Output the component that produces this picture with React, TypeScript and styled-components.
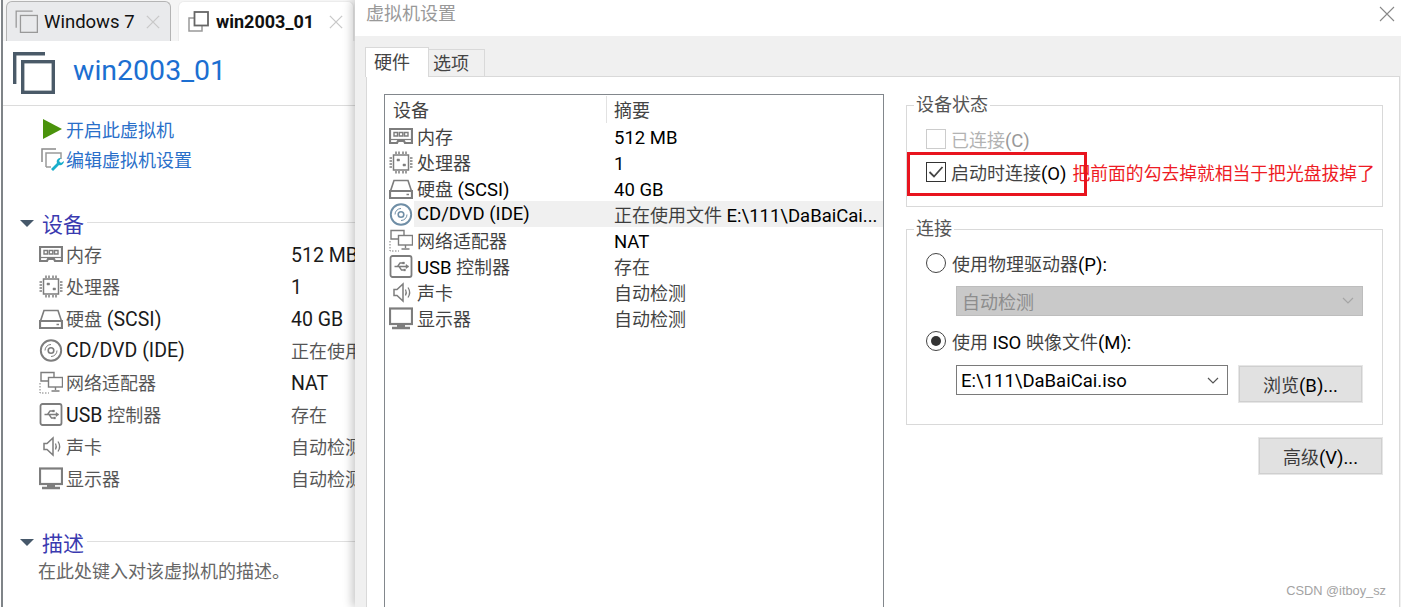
import React from 'react';
import styled, { createGlobalStyle } from 'styled-components';

const FONT = `Roboto, "Noto Sans CJK SC", sans-serif`;

const Global = createGlobalStyle`
  html, body { margin: 0; padding: 0; background: #fff; overflow: hidden; }
  #root { width: 1401px; height: 607px; }
  * { box-sizing: border-box; }
`;

const Screen = styled.div`
  position: relative;
  display: flex;
  width: 1401px;
  height: 607px;
  overflow: hidden;
  font-family: ${FONT};
  font-size: 18px;
  color: #1a1a1a;
`;

/* Chinese runs render thin and grey in the source, Latin runs dark and a little wider */
const Han = styled.span`
  font-size: 18px;
  opacity: 0.74;
`;
const Mixed = ({ text }: { text: string }) => (
  <>
    {text.split(/([\u3000-\u9fff]+)/).map((run, i) =>
      i % 2 ? <Han key={i}>{run}</Han> : <React.Fragment key={i}>{run}</React.Fragment>
    )}
  </>
);
/* a purely Latin cell has a shorter line box, so it sits a little high without this */
const ValueCell = styled.span<{ $latin: boolean }>`
  padding-top: ${p => (p.$latin ? '3px' : '0')};
`;
const isLatin = (text: string) => /^[\x00-\x7f]+$/.test(text);

/* ---------- left panel ---------- */
const LeftPanel = styled.section`
  flex: 0 0 355px;
  display: flex;
  flex-direction: column;
  border-left: 2px solid #7f8488;
  margin-left: 1px;
  margin-right: -1px;
  overflow: hidden;
`;
const TabStrip = styled.div`
  flex: 0 0 41px;
  display: flex;
  align-items: flex-end;
  gap: 7px;
  padding-left: 3px;
  background: #f5f5f5;
`;
const VmTab = styled.div<{ $active?: boolean }>`
  height: 40px;
  width: ${p => (p.$active ? '176px' : '165px')};
  display: flex;
  align-items: center;
  padding: 0 10px 0 ${p => (p.$active ? '9px' : '8px')};
  border-radius: 6px 6px 0 0;
  border: 1px solid ${p => (p.$active ? '#ececec' : '#b4b4b4')};
  border-bottom: 0;
  background: ${p => (p.$active ? '#fff' : '#e9eaec')};
  font-size: ${p => (p.$active ? '18px' : '18.500px')};
  font-weight: ${p => (p.$active ? 700 : 400)};
  color: #111;
`;
const TabLabel = styled.span<{ $active?: boolean }>`
  margin-left: ${p => (p.$active ? '7px' : '6px')};
  flex: 1;
  white-space: nowrap;
`;
const VmHeader = styled.header`
  flex: 0 0 65px;
  display: flex;
  align-items: center;
  padding: 0 0 2px 9px;
  border-bottom: 1px solid #dcdcdc;
`;
const VmTitle = styled.h1`
  margin: 0 0 3px 18px;
  font-size: 28.500px;
  font-weight: 400;
  color: #1c6fd1;
`;
const Actions = styled.div`
  display: flex;
  flex-direction: column;
  padding: 8px 0 0 37px;
  height: 100px;
`;
const ActionRow = styled.div`
  height: 30px;
  display: flex;
  align-items: center;
  color: #2a6fc9;
  font-size: 18px;
`;
const ActionIcon = styled.span<{ $inset?: number }>`
  flex: 0 0 26px;
  display: flex;
  align-items: center;
  padding-left: ${p => p.$inset ?? 0}px;
`;
const SectionHead = styled.div`
  height: 34px;
  display: flex;
  align-items: center;
  padding-left: 17px;
  color: #3a3ab0;
  font-size: 21px;
`;
const Caret = styled.span`
  width: 0;
  height: 0;
  margin-right: 8px;
  border-left: 7px solid transparent;
  border-right: 7px solid transparent;
  border-top: 7px solid #46586a;
`;
const SectionRule = styled.span`
  flex: 1;
  height: 1px;
  margin: 0 0 2px 3px;
  background: #dfdfdf;
`;
const LeftRows = styled.div`
  display: flex;
  flex-direction: column;
  padding-left: 36px;
  margin: -2px 0 31px;
`;
const LeftRow = styled.div`
  height: 32px;
  display: flex;
  align-items: center;
  white-space: nowrap;
  font-size: 19.500px;
  color: #1a1a1a;
`;
const LeftName = styled.span`
  flex: 0 0 252px;
  display: flex;
  align-items: center;
  gap: 3px;
`;
const Description = styled.p`
  margin: 0;
  padding-left: 35px;
  font-size: 18px;
  line-height: 26px;
  color: #666;
`;

/* ---------- dialog ---------- */
const Dialog = styled.section`
  position: relative;
  flex: 1;
  display: flex;
  flex-direction: column;
  background: #f0f0f0;
  padding: 0 1px 0 11px;
  box-shadow: -3px 0 9px rgba(0, 0, 0, 0.22);
`;
const TitleBar = styled.div`
  flex: 0 0 36px;
  margin: 0 -1px 0 -11px;
  padding: 0 6px 9px 11px;
  display: flex;
  align-items: center;
  justify-content: space-between;
  background: #fff;
  color: #999;
  font-size: 18px;
  line-height: 26px;
`;
const DialogTabs = styled.div`
  display: flex;
  align-items: flex-end;
  margin: 11px 0 -1px -1px;
  position: relative;
  height: 30px;
`;
const DialogTab = styled.div<{ $active?: boolean }>`
  height: ${p => (p.$active ? '30px' : '28px')};
  width: ${p => (p.$active ? '64px' : '56px')};
  display: flex;
  align-items: center;
  padding: 0 0 ${p => (p.$active ? '4px' : '2px')} ${p => (p.$active ? '8px' : '4px')};
  border: 1px solid #d9d9d9;
  border-left: ${p => (p.$active ? '1px solid #d9d9d9' : '0')};
  border-bottom: ${p => (p.$active ? '0' : '1px solid #d9d9d9')};
  background: ${p => (p.$active ? '#fff' : '#f0f0f0')};
  position: relative;
  z-index: ${p => (p.$active ? 2 : 1)};
  color: #444;
  font-size: 18px;
`;
const Page = styled.div`
  flex: 1;
  display: flex;
  gap: 22px;
  padding: 17px 16px 0 17px;
  background: #fff;
  border: 1px solid #d9d9d9;
  border-bottom: 0;
`;
const ListBox = styled.div`
  flex: 0 0 500px;
  border: 1px solid #82878c;
  border-bottom: 0;
`;
const ListHead = styled.div`
  height: 28px;
  display: flex;
  align-items: center;
  color: #444;
  font-size: 18px;
`;
const HeadCell = styled.span<{ $first?: boolean }>`
  height: 27px;
  display: flex;
  align-items: center;
  padding-left: ${p => (p.$first ? '8px' : '7px')};
  width: ${p => (p.$first ? '222px' : 'auto')};
  ${p => (p.$first ? 'border-right: 1px solid #e2e2e2;' : '')}
`;
const ListRow = styled.div`
  height: 26px;
  display: flex;
  align-items: center;
  white-space: nowrap;
  font-size: 18.500px;
  color: #000;
`;
const IconSlot = styled.span`
  flex: 0 0 29px;
  display: flex;
  justify-content: flex-end;
  padding-right: 1px;
`;
const RowBody = styled.div<{ $selected?: boolean }>`
  flex: 1;
  height: 100%;
  display: flex;
  align-items: center;
  background: ${p => (p.$selected ? '#f0f0f0' : 'transparent')};
`;
const RowName = styled.span`
  flex: 0 0 200px;
  padding-left: 3px;
`;
const Side = styled.div`
  flex: 0 0 477px;
  display: flex;
  flex-direction: column;
`;
const Group = styled.fieldset<{ $height: number }>`
  margin: 0 0 11px;
  padding: 6px 0 0 19px;
  height: ${p => p.$height}px;
  border: 1px solid #d9d9d9;
  min-width: 0;
`;
const Legend = styled.legend`
  margin-left: -12px;
  padding: 0 2px;
  line-height: 22px;
  font-size: 18px;
  color: #555;
`;
const CheckRow = styled.div<{ $disabled?: boolean }>`
  position: relative;
  height: 33px;
  display: flex;
  align-items: center;
  white-space: nowrap;
  font-size: 18.500px;
  color: ${p => (p.$disabled ? '#999' : '#000')};
`;
const CheckBox = styled.span<{ $disabled?: boolean }>`
  flex: 0 0 20px;
  height: 20px;
  margin-right: 5px;
  display: flex;
  align-items: center;
  justify-content: center;
  border: 1px solid ${p => (p.$disabled ? '#ccc' : '#333')};
  background: #fff;
`;
const Annotation = styled.span`
  margin-left: 6px;
  color: #ee1c25;
  font-size: 17.800px;
`;
const RedBox = styled.span`
  position: absolute;
  left: -19px;
  top: -3px;
  width: 180px;
  height: 44px;
  border: 3px solid #e8141e;
  pointer-events: none;
`;
const RadioRow = styled.div<{ $top: number }>`
  height: 30px;
  margin-top: ${p => p.$top}px;
  display: flex;
  align-items: center;
  white-space: nowrap;
  font-size: 18.500px;
  color: #000;
`;
const Radio = styled.span<{ $on?: boolean }>`
  flex: 0 0 20px;
  height: 20px;
  margin-right: 6px;
  border: 1px solid #444;
  border-radius: 50%;
  background: #fff;
  display: flex;
  align-items: center;
  justify-content: center;
  &::after {
    content: '';
    width: 10px;
    height: 10px;
    border-radius: 50%;
    background: ${p => (p.$on ? '#333' : 'transparent')};
  }
`;
const DriveSelect = styled.div`
  width: 407px;
  height: 30px;
  margin: 8px 0 0 30px;
  padding: 0 8px 0 5px;
  display: flex;
  align-items: center;
  justify-content: space-between;
  background: #c9c9c9;
  border: 1px solid #bdbdbd;
  color: #8d8d8d;
  font-size: 18px;
`;
const IsoRow = styled.div`
  display: flex;
  align-items: flex-start;
  gap: 11px;
  margin: 9px 0 0 30px;
`;
const IsoSelect = styled.div`
  width: 272px;
  height: 30px;
  padding: 2px 8px 0 4px;
  display: flex;
  align-items: center;
  justify-content: space-between;
  background: #fff;
  border: 1px solid #7a7a7a;
  color: #000;
  font-size: 18.500px;
`;
const PushButton = styled.button<{ $top?: number; $right?: boolean }>`
  width: 123px;
  height: 36px;
  margin-top: ${p => p.$top ?? 0}px;
  align-self: ${p => (p.$right ? 'flex-end' : 'auto')};
  margin-right: ${p => (p.$right ? '1px' : '0')};
  padding: 0;
  background: #e1e1e1;
  border: 1px solid #cfcfcf;
  outline: 1px solid #e6e6e6;
  font-family: ${FONT};
  font-size: 18.500px;
  color: #000;
`;
const Watermark = styled.span`
  position: absolute;
  right: 15px;
  bottom: 9px;
  font-family: "Liberation Sans", sans-serif;
  font-size: 12.800px;
  color: #a3a3a3;
`;

/* ---------- drawings ---------- */
const VmIcon = ({ size, width, color }: { size: number; width: number; color: string }) => {
  const s = 33;
  return (
    <svg width={size} height={size} viewBox="0 0 43 43" fill="none" stroke={color} strokeWidth={width} style={{ flex: 'none' }}>
      <path d={`M${width / 2 + 1} ${s}V${width / 2 + 1}H${s}`} />
      <rect x={10 + width / 2 - 1} y={10 + width / 2 - 1} width={s - width + 1} height={s - width + 1} />
    </svg>
  );
};
const ActiveVmIcon = () => (
  <svg width="21" height="21" viewBox="0 0 21 21" fill="none" style={{ flex: 'none' }}>
    <rect x="1" y="7" width="13" height="13" stroke="#999" strokeWidth="1.500" />
    <rect x="6.500" y="1" width="13.500" height="13.500" fill="#fff" stroke="#666" strokeWidth="1.800" />
  </svg>
);
const PlayIcon = () => (
  <svg width="20" height="22" viewBox="0 0 20 22"><path d="M0 1l19 10L0 21z" fill="#4a930c" /></svg>
);
const EditIcon = () => (
  <svg width="24" height="24" viewBox="0 0 24 24" fill="none">
    <path d="M2 15V2h14" stroke="#8b8b8b" strokeWidth="1.500" />
    <path d="M6 20V6h15v6M6 20h5" stroke="#9a9a9a" strokeWidth="1.500" />
    <path d="M11 22l6-6c-1-3 1-5 4-5l-2 3 2 2 3-2c0 3-3 5-5 4l-6 6z" fill="#19aecb" />
  </svg>
);

type IconKind = 'ram' | 'cpu' | 'disk' | 'cd' | 'net' | 'usb' | 'sound' | 'screen';

const DeviceIcon = ({ kind, color = '#7d7d7d' }: { kind: IconKind; color?: string }) => {
  const body: Record<IconKind, React.ReactNode> = {
    ram: (
      <>
        <path d="M1 4h22v14h-7l-1-2H9l-1 2H1z" strokeWidth="2.200" />
        <path d="M5 7.500h3.500V11H5zM10.300 7.500h3.500V11h-3.500zM15.500 7.500H19V11h-3.500z" strokeWidth="1.400" />
        <path d="M1 14.500h22" strokeWidth="1.200" />
      </>
    ),
    cpu: (
      <>
        <rect x="4.500" y="4" width="15" height="15" strokeWidth="1.500" />
        <path d="M8 8h2.500v2H8zM14 13h2.500v2H14z" fill={color} strokeWidth="0.500" />
        <path d="M7 0.500v2.500M10 0.500v2.500M14 0.500v2.500M17 0.500v2.500M7 20v2.500M10 20v2.500M14 20v2.500M17 20v2.500M0.500 7H3M0.500 10H3M0.500 13H3M0.500 16H3M21 7h2.500M21 10h2.500M21 13h2.500M21 16h2.500" strokeWidth="1.500" />
      </>
    ),
    disk: (
      <>
        <path d="M1.500 14L5 3.500h14L22.500 14" strokeWidth="1.600" />
        <path d="M1 14h22v7H1z" strokeWidth="2.200" />
        <path d="M17.500 17.500H20" strokeWidth="1.500" />
      </>
    ),
    cd: (
      <>
        <circle cx="12" cy="11.500" r="10.200" strokeWidth="1.900" />
        <circle cx="12" cy="11.500" r="2.800" strokeWidth="1.600" />
        <path d="M6 11.500A6 6 0 0 1 12 5.500M18 11.500a6 6 0 0 1-6 6" strokeWidth="1" />
      </>
    ),
    net: (
      <>
        <path d="M2 1.500h13V10H2z" strokeWidth="1.400" />
        <rect x="9.500" y="6.500" width="14" height="9.500" fill="#fff" strokeWidth="1.400" />
        <path d="M16.500 16v3M12.500 20h8" strokeWidth="1.400" />
        <path d="M1 12v10h9" strokeWidth="1" strokeDasharray="1.500 1.500" />
      </>
    ),
    usb: (
      <>
        <rect x="1.500" y="1" width="21" height="21" rx="2" strokeWidth="1.800" />
        <path d="M5.500 11.500H17M8.500 11.500l2.500-3.500h3M10 11.500l2.500 3.500h2" strokeWidth="1.300" />
        <path d="M17 9.500l3 2-3 2z" fill={color} strokeWidth="0.500" />
        <path d="M13.500 7h2v2h-2zM14.500 14h2v2h-2z" fill={color} strokeWidth="0.300" />
      </>
    ),
    sound: (
      <>
        <path d="M5 8.500h3l6-5.500v17l-6-5.500H5z" strokeWidth="1.500" />
        <path d="M16.500 8.500c1 2 1 4 0 6M19 6.500c2 3 2 7 0 10" strokeWidth="1.300" />
      </>
    ),
    screen: (
      <>
        <rect x="1" y="1.500" width="22" height="15.500" strokeWidth="2.200" />
        <path d="M8 18.500h8M3 21h18" strokeWidth="2.600" />
      </>
    ),
  };
  return (
    <svg width="24" height="23" viewBox="0 0 24 23" fill="none" stroke={color} style={{ flex: 'none' }}>
      {body[kind]}
    </svg>
  );
};

const CloseMark = ({ size, color, weight = 1.100 }: { size: number; color: string; weight?: number }) => (
  <svg width={size} height={size} viewBox="0 0 16 16" stroke={color} strokeWidth={weight} style={{ flex: 'none' }}>
    <path d="M1 1l14 14M15 1L1 15" />
  </svg>
);
const Chevron = ({ color }: { color: string }) => (
  <svg width="12" height="8" viewBox="0 0 12 8" fill="none" stroke={color} strokeWidth="1.200">
    <path d="M1 1l5 5 5-5" />
  </svg>
);

const DEVICES: { kind: IconKind; name: string; leftValue: string; value: string }[] = [
  { kind: 'ram', name: '内存', leftValue: '512 MB', value: '512 MB' },
  { kind: 'cpu', name: '处理器', leftValue: '1', value: '1' },
  { kind: 'disk', name: '硬盘 (SCSI)', leftValue: '40 GB', value: '40 GB' },
  { kind: 'cd', name: 'CD/DVD (IDE)', leftValue: '正在使用文件', value: '正在使用文件 E:\\111\\DaBaiCai...' },
  { kind: 'net', name: '网络适配器', leftValue: 'NAT', value: 'NAT' },
  { kind: 'usb', name: 'USB 控制器', leftValue: '存在', value: '存在' },
  { kind: 'sound', name: '声卡', leftValue: '自动检测', value: '自动检测' },
  { kind: 'screen', name: '显示器', leftValue: '自动检测', value: '自动检测' },
];

export default function App() {
  return (
    <Screen>
      <Global />
      <LeftPanel>
        <TabStrip>
          <VmTab>
            <VmIcon size={23} width={2.400} color="#999" />
            <TabLabel>Windows 7</TabLabel>
            <CloseMark size={14} color="#c8c8c8" weight={1.500} />
          </VmTab>
          <VmTab $active>
            <ActiveVmIcon />
            <TabLabel $active>win2003_01</TabLabel>
            <CloseMark size={14} color="#c8c8c8" weight={1.500} />
          </VmTab>
        </TabStrip>
        <VmHeader>
          <VmIcon size={43} width={3.400} color="#4a5a68" />
          <VmTitle>win2003_01</VmTitle>
        </VmHeader>
        <Actions>
          <ActionRow>
            <ActionIcon $inset={3}><PlayIcon /></ActionIcon>
            开启此虚拟机
          </ActionRow>
          <ActionRow>
            <ActionIcon><EditIcon /></ActionIcon>
            编辑虚拟机设置
          </ActionRow>
        </Actions>
        <SectionHead>
          <Caret />
          设备
          <SectionRule />
        </SectionHead>
        <LeftRows>
          {DEVICES.map(d => (
            <LeftRow key={d.kind}>
              <LeftName><DeviceIcon kind={d.kind} /><span><Mixed text={d.name} /></span></LeftName>
              <ValueCell $latin={isLatin(d.leftValue)}><Mixed text={d.leftValue} /></ValueCell>
            </LeftRow>
          ))}
        </LeftRows>
        <SectionHead>
          <Caret />
          描述
          <SectionRule />
        </SectionHead>
        <Description>在此处键入对该虚拟机的描述。</Description>
      </LeftPanel>

      <Dialog>
        <TitleBar>
          虚拟机设置
          <CloseMark size={16} color="#888" />
        </TitleBar>
        <DialogTabs>
          <DialogTab $active>硬件</DialogTab>
          <DialogTab>选项</DialogTab>
        </DialogTabs>
        <Page>
          <ListBox>
            <ListHead>
              <HeadCell $first>设备</HeadCell>
              <HeadCell>摘要</HeadCell>
            </ListHead>
            {DEVICES.map(d => (
              <ListRow key={d.kind}>
                <IconSlot><DeviceIcon kind={d.kind} color={d.kind === 'cd' ? '#6f8ea6' : '#7d7d7d'} /></IconSlot>
                <RowBody $selected={d.kind === 'cd'}>
                  <RowName><Mixed text={d.name} /></RowName>
                  <ValueCell $latin={isLatin(d.value)}><Mixed text={d.value} /></ValueCell>
                </RowBody>
              </ListRow>
            ))}
          </ListBox>
          <Side>
            <Group $height={113}>
              <Legend>设备状态</Legend>
              <CheckRow $disabled>
                <CheckBox $disabled />
                <span><Mixed text="已连接(C)" /></span>
              </CheckRow>
              <CheckRow>
                <CheckBox>
                  <svg width="16" height="14" viewBox="0 0 16 14" fill="none" stroke="#444" strokeWidth="1.800">
                    <path d="M1.500 7l4.500 4.500L14.500 2" />
                  </svg>
                </CheckBox>
                <span><Mixed text="启动时连接(O)" /></span>
                <Annotation>把前面的勾去掉就相当于把光盘拔掉了</Annotation>
                <RedBox />
              </CheckRow>
            </Group>
            <Group $height={207}>
              <Legend>连接</Legend>
              <RadioRow $top={2}><Radio /><span><Mixed text="使用物理驱动器(P):" /></span></RadioRow>
              <DriveSelect>自动检测<Chevron color="#a5a5a5" /></DriveSelect>
              <RadioRow $top={10}><Radio $on /><span><Mixed text="使用 ISO 映像文件(M):" /></span></RadioRow>
              <IsoRow>
                <IsoSelect>E:\111\DaBaiCai.iso<Chevron color="#555" /></IsoSelect>
                <PushButton $top={1}><Mixed text="浏览(B)..." /></PushButton>
              </IsoRow>
            </Group>
            <PushButton $right $top={2}><Mixed text="高级(V)..." /></PushButton>
          </Side>
        </Page>
      </Dialog>
      <Watermark>CSDN @itboy_sz</Watermark>
    </Screen>
  );
}
